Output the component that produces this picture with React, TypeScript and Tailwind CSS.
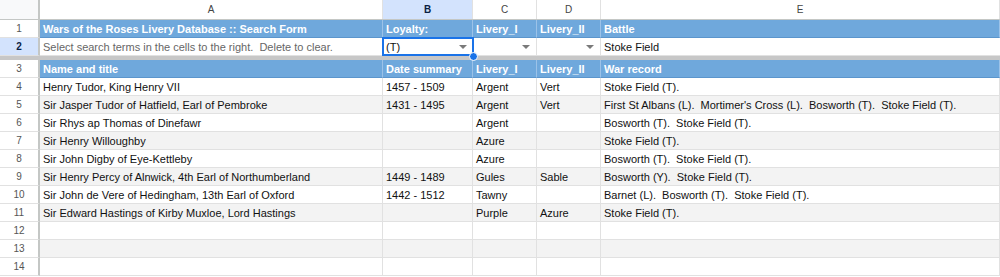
import React from "react";

const widths = ["w-[40px]", "w-[343px]", "w-[90px]", "w-[64px]", "w-[64px]", "flex-1"];

const rows: string[][] = [
  ["Henry Tudor, King Henry VII", "1457 - 1509", "Argent", "Vert", "Stoke Field (T)."],
  ["Sir Jasper Tudor of Hatfield, Earl of Pembroke", "1431 - 1495", "Argent", "Vert", "First St Albans (L).  Mortimer's Cross (L).  Bosworth (T).  Stoke Field (T)."],
  ["Sir Rhys ap Thomas of Dinefawr", "", "Argent", "", "Bosworth (T).  Stoke Field (T)."],
  ["Sir Henry Willoughby", "", "Azure", "", "Stoke Field (T)."],
  ["Sir John Digby of Eye-Kettleby", "", "Azure", "", "Bosworth (T).  Stoke Field (T)."],
  ["Sir Henry Percy of Alnwick, 4th Earl of Northumberland", "1449 - 1489", "Gules", "Sable", "Bosworth (Y).  Stoke Field (T)."],
  ["Sir John de Vere of Hedingham, 13th Earl of Oxford", "1442 - 1512", "Tawny", "", "Barnet (L).  Bosworth (T).  Stoke Field (T)."],
  ["Sir Edward Hastings of Kirby Muxloe, Lord Hastings", "", "Purple", "Azure", "Stoke Field (T)."],
  ["", "", "", "", ""],
  ["", "", "", "", ""],
  ["", "", "", "", ""],
];

function Arrow() {
  return (
    <svg width="8" height="4" viewBox="0 0 8 4" className="ml-auto mr-[6px] shrink-0">
      <path d="M0 0 L8 0 L4 4 Z" fill="#7a7a7a" />
    </svg>
  );
}

function RowNum({ n, active }: { n: number; active?: boolean }) {
  return (
    <div
      className={`${widths[0]} shrink-0 flex items-center justify-center border-r-2 border-r-[#c4c7c5] border-b border-b-[#e1e1e1] text-[10px] ${
        active ? "bg-[#d3e3fd] text-[#0b1f44] font-bold" : "bg-white text-[#555]"
      }`}
    >
      {n}
    </div>
  );
}

function BlueRow({ n, cells }: { n: number; cells: string[] }) {
  return (
    <div className="flex h-[18px]">
      <RowNum n={n} />
      {cells.map((c, i) => (
        <div
          key={i}
          className={`${widths[i + 1]} shrink-0 bg-[#6fa8dc] text-white font-bold px-[3px] pt-[1px] flex items-center border-r border-r-[#9cc2e8] border-b border-b-[#5b95cc] whitespace-nowrap overflow-hidden`}
        >
          {c}
        </div>
      ))}
    </div>
  );
}

export default function App() {
  return (
    <div className="w-[1000px] h-[277px] bg-white overflow-hidden text-[11px] text-[#111] font-['Liberation_Sans',Arial,sans-serif] leading-none">
      {/* column letters */}
      <div className="flex h-[20px] border-b border-b-[#c4c7c5]">
        <div className={`${widths[0]} shrink-0 bg-[#f8f9fa] border-r-2 border-r-[#c4c7c5]`} />
        {["A", "B", "C", "D", "E"].map((l, i) => (
          <div
            key={l}
            className={`${widths[i + 1]} shrink-0 flex items-center justify-center pt-[1px] text-[10px] border-r border-r-[#e1e1e1] ${
              l === "B" ? "bg-[#d3e3fd] text-[#0b1f44] font-bold" : "bg-white text-[#444]"
            }`}
          >
            {l}
          </div>
        ))}
      </div>

      <BlueRow n={1} cells={["Wars of the Roses Livery Database :: Search Form", "Loyalty:", "Livery_I", "Livery_II", "Battle"]} />

      {/* search row */}
      <div className="flex h-[18px]">
        <RowNum n={2} active />
        <div className={`${widths[1]} shrink-0 px-[3px] pt-[1px] flex items-center text-[#666] border-r border-r-[#e1e1e1] border-b border-b-[#e1e1e1]`}>
          Select search terms in the cells to the right.&nbsp; Delete to clear.
        </div>
        <div className={`${widths[2]} shrink-0 relative flex items-center pl-[3px] pt-[1px] border-b border-b-[#e1e1e1]`}>
          <span>(T)</span>
          <Arrow />
          <div className="absolute -left-px -top-px -right-px -bottom-px border-2 border-[#1a73e8] pointer-events-none" />
          <div className="absolute -right-[5px] -bottom-[6px] w-[9px] h-[9px] rounded-full bg-[#1a73e8] border border-white z-10" />
        </div>
        <div className={`${widths[3]} shrink-0 flex items-center border-r border-r-[#e1e1e1] border-b border-b-[#e1e1e1]`}>
          <Arrow />
        </div>
        <div className={`${widths[4]} shrink-0 flex items-center border-r border-r-[#e1e1e1] border-b border-b-[#e1e1e1]`}>
          <Arrow />
        </div>
        <div className={`${widths[5]} px-[3px] pt-[1px] flex items-center border-b border-b-[#e1e1e1]`}>Stoke Field</div>
      </div>

      {/* frozen divider */}
      <div className="h-[4px] bg-[#c7c7c7]" />

      <BlueRow n={3} cells={["Name and title", "Date summary", "Livery_I", "Livery_II", "War record"]} />

      {rows.map((r, ri) => (
        <div key={ri} className={`flex h-[18px] ${ri % 2 === 1 ? "bg-[#f3f3f3]" : "bg-white"}`}>
          <RowNum n={ri + 4} />
          {r.map((c, ci) => (
            <div
              key={ci}
              className={`${widths[ci + 1]} shrink-0 px-[3px] pt-[1px] flex items-center whitespace-pre overflow-hidden border-r border-r-[#e1e1e1] border-b border-b-[#e1e1e1]`}
            >
              {c}
            </div>
          ))}
        </div>
      ))}
    </div>
  );
}
